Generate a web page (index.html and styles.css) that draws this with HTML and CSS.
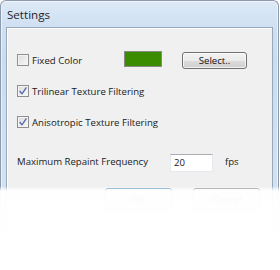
FILE: index.html
```html
<!DOCTYPE html>
<html>
<head>
<meta charset="utf-8">
<link rel="stylesheet" href="styles.css">
</head>
<body>
<div class="window">
  <div class="titlebar"><span class="title">Settings</span></div>
  <div class="client">
    <div class="row row1">
      <label class="check-group">
        <span class="checkbox"></span>
        <span class="label">Fixed Color</span>
      </label>
      <span class="swatch"></span>
      <span class="button select-btn">Select..</span>
    </div>
    <div class="row row2">
      <span class="checkbox checked"><svg width="10" height="10" viewBox="0 0 10 10"><path d="M1.6 5 L4 7.8 L8.4 1.4" fill="none" stroke="#5670b0" stroke-width="1.4" stroke-linejoin="round"/></svg></span>
      <span class="label">Trilinear Texture Filtering</span>
    </div>
    <div class="row row3">
      <span class="checkbox checked"><svg width="10" height="10" viewBox="0 0 10 10"><path d="M1.6 5 L4 7.8 L8.4 1.4" fill="none" stroke="#5670b0" stroke-width="1.4" stroke-linejoin="round"/></svg></span>
      <span class="label">Anisotropic Texture Filtering</span>
    </div>
    <div class="row row4">
      <span class="freq-label">Maximum Repaint Frequency</span>
      <span class="input">20</span>
      <span class="unit">fps</span>
    </div>
    <div class="row buttons">
      <span class="button ok-btn">OK</span>
      <span class="button cancel-btn">Cancel</span>
    </div>
  </div>
  <div class="fade"></div>
</div>
</body>
</html>
```

FILE: styles.css
```css
html, body {
  margin: 0;
  padding: 0;
  background: #ffffff;
  width: 280px;
  height: 270px;
  overflow: hidden;
  font-family: "Open Sans", "Liberation Sans", sans-serif;
  font-size: 9.6px;
  color: #1a1a1a;
}

.window {
  position: relative;
  box-sizing: border-box;
  width: 279px;
  height: 270px;
  border: 1px solid #8c9aab;
  border-bottom: none;
  border-radius: 6px 6px 0 0;
  background: linear-gradient(#dde9f6 0px, #cfe0f2 26px, #c9dcf0 60px, #d3e3f3 200px);
  box-shadow: inset 0 0 0 1px rgba(255,255,255,0.55);
  padding: 0 5px 0 5px;
}

.titlebar {
  height: 26px;
  display: flex;
  align-items: center;
  padding-left: 1px;
}

.title {
  font-size: 11.6px;
  color: #1e1e1e;
  padding-top: 1px;
}

.client {
  box-sizing: border-box;
  height: 243px;
  border: 1px solid #98a8bb;
  background: #f0f0f0;
  box-shadow: inset 1px 1px 0 #ffffff;
  padding: 23px 0 0 10px;
  display: flex;
  flex-direction: column;
}

.row {
  display: flex;
  align-items: center;
  height: 18px;
}

.row2 { margin-top: 13px; }
.row3 { margin-top: 13px; }
.row4 { margin-top: 21px; }
.buttons { margin-top: 18px; height: 22px; align-items: flex-start; }

.check-group {
  display: flex;
  align-items: center;
  width: 107px;
}

.checkbox {
  box-sizing: border-box;
  width: 12px;
  height: 12px;
  border: 1px solid #8f8f8f;
  background: linear-gradient(135deg, #dcdcdc, #f8f8f8);
  box-shadow: inset 0 0 0 1px #f4f4f4;
  margin-right: 3px;
  flex: none;
  display: flex;
  align-items: center;
  justify-content: center;
}

.checkbox svg { display: block; }

.swatch {
  box-sizing: border-box;
  width: 38px;
  height: 16px;
  background: #3c8c02;
  border: 1px solid #8a8a8a;
  margin-top: -2px;
}

.button {
  box-sizing: border-box;
  height: 17px;
  border: 1px solid #707070;
  border-radius: 3px;
  background: linear-gradient(#f2f2f2 0%, #ebebeb 50%, #dddddd 51%, #cfcfcf 100%);
  box-shadow: inset 0 0 0 1px rgba(255,255,255,0.7);
  display: flex;
  align-items: center;
  justify-content: center;
  color: #111;
}

.select-btn {
  width: 65px;
  margin-left: 20px;
  margin-top: 1px;
}

.freq-label {
  width: 153px;
}

.input {
  box-sizing: border-box;
  width: 43px;
  height: 18px;
  background: #ffffff;
  border: 1px solid #e3e9ef;
  border-top-color: #abadb3;
  padding-left: 3px;
  display: flex;
  align-items: center;
  margin-top: 3px;
}

.unit {
  margin-left: 12px;
}

.ok-btn {
  width: 67px;
  height: 22px;
  margin-left: 88px;
  border-color: #3c7fb1;
}

.cancel-btn {
  width: 67px;
  height: 22px;
  margin-left: 21px;
}

.fade {
  position: absolute;
  left: -1px;
  right: -1px;
  top: 186px;
  bottom: 0;
  background: linear-gradient(rgba(255,255,255,0.2) 0px, rgba(255,255,255,0.96) 4px, rgba(255,255,255,0.975) 20px, rgba(255,255,255,0.99) 50px, #ffffff 70px);
}
```
